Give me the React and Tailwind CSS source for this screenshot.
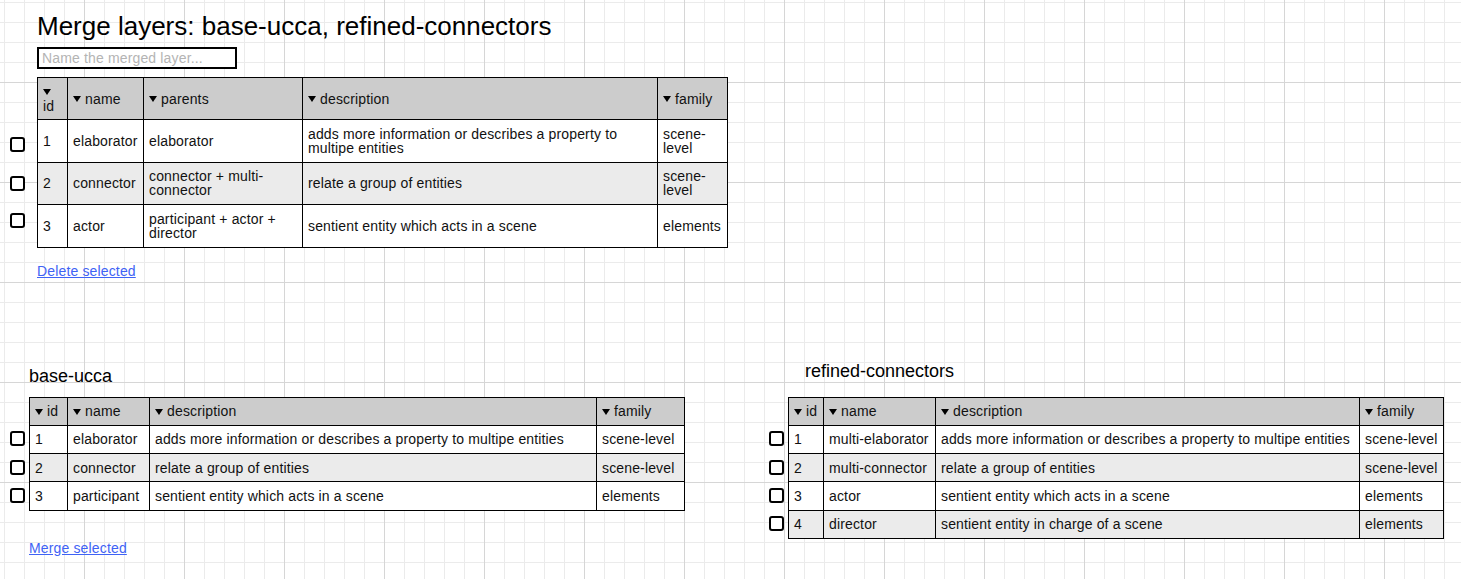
const topCols = "grid grid-cols-[31px_76px_159px_355px_70px]";
const leftCols = "grid grid-cols-[39px_82px_447px_88px]";
const rightCols = "grid grid-cols-[36px_112px_424px_84px]";

const topRows = [
  {
    id: "1",
    name: "elaborator",
    parents: "elaborator",
    description: "adds more information or describes a property to multipe entities",
    family: "scene-level",
    shift: "translate-y-[3px]",
  },
  {
    id: "2",
    name: "connector",
    parents: "connector + multi-connector",
    description: "relate a group of entities",
    family: "scene-level",
    shift: "",
  },
  {
    id: "3",
    name: "actor",
    parents: "participant + actor + director",
    description: "sentient entity which acts in a scene",
    family: "elements",
    shift: "-translate-y-[6px]",
  },
];

const baseRows = [
  { id: "1", name: "elaborator", description: "adds more information or describes a property to multipe entities", family: "scene-level" },
  { id: "2", name: "connector", description: "relate a group of entities", family: "scene-level" },
  { id: "3", name: "participant", description: "sentient entity which acts in a scene", family: "elements" },
];

const refinedRows = [
  { id: "1", name: "multi-elaborator", description: "adds more information or describes a property to multipe entities", family: "scene-level" },
  { id: "2", name: "multi-connector", description: "relate a group of entities", family: "scene-level" },
  { id: "3", name: "actor", description: "sentient entity which acts in a scene", family: "elements" },
  { id: "4", name: "director", description: "sentient entity in charge of a scene", family: "elements" },
];

function Caret() {
  return (
    <svg width="8" height="6" viewBox="0 0 8 6" className="inline-block mb-[1px]">
      <path d="M0 0H8L4 6Z" fill="#000" />
    </svg>
  );
}

function Checkbox({ shift }) {
  return (
    <div className={`h-[15px] w-[15px] rounded-[3px] border-2 border-black bg-white ${shift}`} />
  );
}

function HeadCell({ label, first }) {
  return (
    <div
      className={`flex items-center border-t border-r border-b border-black bg-[#cccccc] px-[5px] leading-[14px] ${
        first ? "border-l" : ""
      }`}
    >
      <span>
        <Caret /> {label}
      </span>
    </div>
  );
}

function Cell({ children, first, bg }) {
  return (
    <div
      className={`flex items-center border-r border-b border-black px-[5px] leading-[14px] ${bg} ${
        first ? "border-l" : ""
      }`}
    >
      <span>{children}</span>
    </div>
  );
}

function LayerTable({ rows, cols, boxWidth }) {
  return (
    <div>
      <div className="flex">
        <div className={boxWidth} />
        <div className={`${cols} h-[29px]`}>
          <HeadCell label="id" first />
          <HeadCell label="name" />
          <HeadCell label="description" />
          <HeadCell label="family" />
        </div>
      </div>
      {rows.map((row, i) => {
        const bg = i % 2 === 1 ? "bg-[#ebebeb]" : "bg-white";
        return (
          <div key={row.id} className="flex">
            <div className={`${boxWidth} flex items-center`}>
              <Checkbox shift="-translate-y-[1px]" />
            </div>
            <div className={`${cols} h-[28.3px]`}>
              <Cell first bg={bg}>{row.id}</Cell>
              <Cell bg={bg}>{row.name}</Cell>
              <Cell bg={bg}>{row.description}</Cell>
              <Cell bg={bg}>{row.family}</Cell>
            </div>
          </div>
        );
      })}
    </div>
  );
}

export default function App() {
  return (
    <div className="h-screen min-h-[579px] w-full overflow-hidden bg-white bg-[linear-gradient(to_right,#d6d6d6_1px,transparent_1px),linear-gradient(to_bottom,#d6d6d6_1px,transparent_1px),linear-gradient(to_right,#ebebeb_1px,transparent_1px),linear-gradient(to_bottom,#ebebeb_1px,transparent_1px)] bg-[size:100px_100px,100px_100px,20px_20px,20px_20px] bg-[position:84px_82px,84px_82px,4px_2px,4px_2px] font-['Liberation_Sans',Arial,sans-serif] text-[14px] tracking-[0.15px] text-[#111]">
      <div className="pl-[37px] pt-[12px]">
        <h1 className="text-[26px] leading-[28px] tracking-normal text-black">
          Merge layers: base-ucca, refined-connectors
        </h1>
        <input
          placeholder="Name the merged layer..."
          className="mt-[7px] block h-[22px] w-[200px] border-2 border-black bg-white pl-[3px] text-[14px] outline-none placeholder:text-[#b4b4b4]"
        />
      </div>

      <div className="ml-[10px] mt-[8px]">
        <div className="flex">
          <div className="w-[27px]" />
          <div className={`${topCols} h-[43px]`}>
            <HeadCell label="id" first />
            <HeadCell label="name" />
            <HeadCell label="parents" />
            <HeadCell label="description" />
            <HeadCell label="family" />
          </div>
        </div>
        {topRows.map((row, i) => {
          const bg = i % 2 === 1 ? "bg-[#ebebeb]" : "bg-white";
          return (
            <div key={row.id} className="flex">
              <div className="flex w-[27px] items-center">
                <Checkbox shift={row.shift} />
              </div>
              <div className={`${topCols} h-[42.6px]`}>
                <Cell first bg={bg}>{row.id}</Cell>
                <Cell bg={bg}>{row.name}</Cell>
                <Cell bg={bg}>{row.parents}</Cell>
                <Cell bg={bg}>{row.description}</Cell>
                <Cell bg={bg}>{row.family}</Cell>
              </div>
            </div>
          );
        })}
        <a href="#" className="mt-[15px] ml-[27px] inline-block leading-[16px] text-[#3f63f5] underline">
          Delete selected
        </a>
      </div>

      <div className="ml-[10px] mt-[78px] flex items-start">
        <div className="w-[675px]">
          <h2 className="mt-[6px] mb-[10px] pl-[19px] text-[18px] leading-[21px] tracking-normal text-black">base-ucca</h2>
          <LayerTable rows={baseRows} cols={leftCols} boxWidth="w-[19px]" />
          <a href="#" className="mt-[29px] ml-[19px] inline-block leading-[16px] text-[#3f63f5] underline">
            Merge selected
          </a>
        </div>
        <div className="ml-[84px]">
          <h2 className="mt-[1px] mb-[15px] pl-[36px] text-[18px] leading-[21px] tracking-normal text-black">refined-connectors</h2>
          <LayerTable rows={refinedRows} cols={rightCols} boxWidth="w-[19px]" />
        </div>
      </div>
    </div>
  );
}
